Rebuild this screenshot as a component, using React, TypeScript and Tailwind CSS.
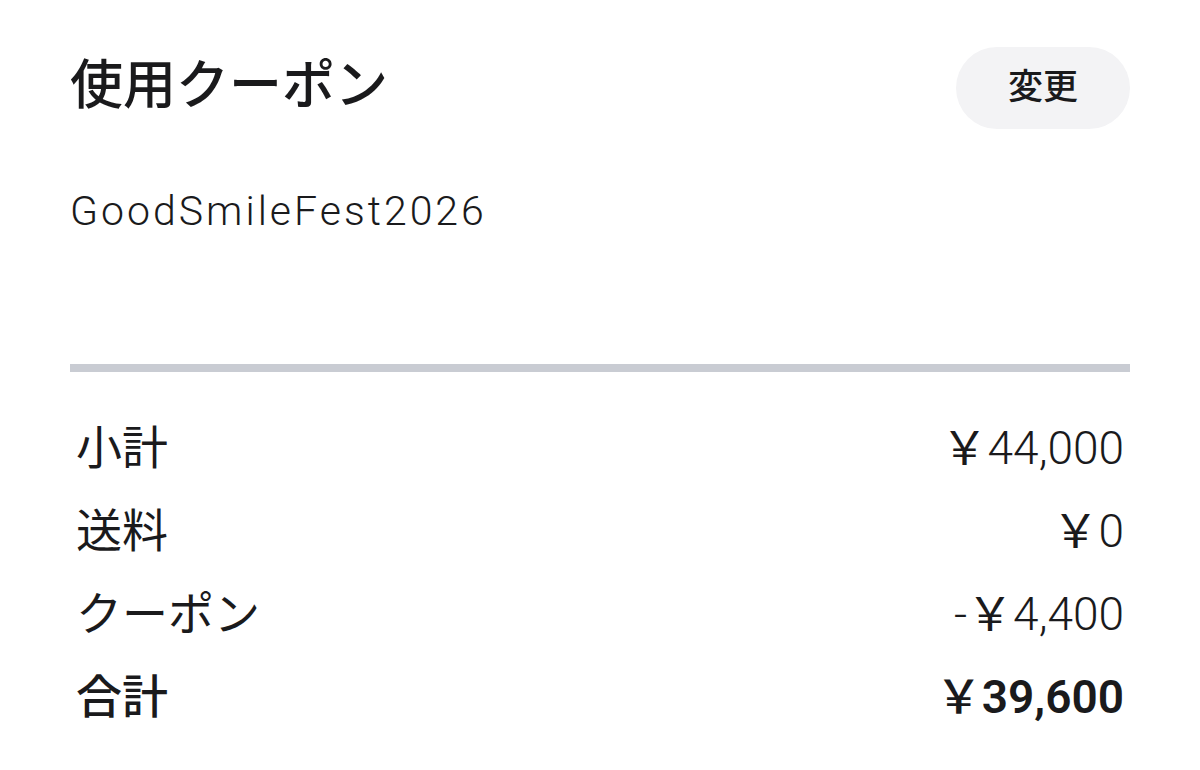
interface PriceRow {
  label: string;
  sign?: string;
  amount: string;
  isTotal?: boolean;
}

const PRICE_ROWS: PriceRow[] = [
  { label: "小計", amount: "44,000" },
  { label: "送料", amount: "0" },
  { label: "クーポン", sign: "-", amount: "4,400" },
  { label: "合計", amount: "39,600", isTotal: true },
];

// full-width yen sign
const YEN = "\uFFE5";

function UsedCoupon({ code }: { code: string }) {
  return (
    <section>
      <div className="flex items-start justify-between">
        <h2 className="text-[53px] leading-[78px] font-medium">使用クーポン</h2>
        <button
          type="button"
          className="rounded-full bg-[#f3f3f5] px-[52px] py-[18px] text-[35px] leading-[46px] font-medium"
        >
          変更
        </button>
      </div>
      <p className="mt-[50px] text-[41px] leading-[64px] font-light tracking-[3px]">
        {code}
      </p>
    </section>
  );
}

function PriceTable({ rows }: { rows: PriceRow[] }) {
  return (
    <table className="mt-[35px] w-full text-[46px] leading-[83px]">
      <tbody>
        {rows.map(({ label, sign, amount, isTotal }) => (
          <tr key={label}>
            <th
              scope="row"
              className={`px-1.5 py-0 text-left ${isTotal ? "font-medium" : "font-normal"}`}
            >
              {label}
            </th>
            <td
              className={`px-1.5 py-0 text-right ${isTotal ? "font-semibold" : "font-light"}`}
            >
              {sign}
              <span className={isTotal ? "font-medium" : "font-normal"}>
                {YEN}
              </span>
              {amount}
            </td>
          </tr>
        ))}
      </tbody>
    </table>
  );
}

export default function App() {
  return (
    <main className="min-h-screen bg-white px-[70px] pt-[47px] font-[Roboto,'Noto_Sans_CJK_JP',sans-serif] text-[#1a1a1c]">
      <UsedCoupon code="GoodSmileFest2026" />
      <hr className="mt-[121px] border-t-8 border-[#c9ccd3]" />
      <PriceTable rows={PRICE_ROWS} />
    </main>
  );
}
